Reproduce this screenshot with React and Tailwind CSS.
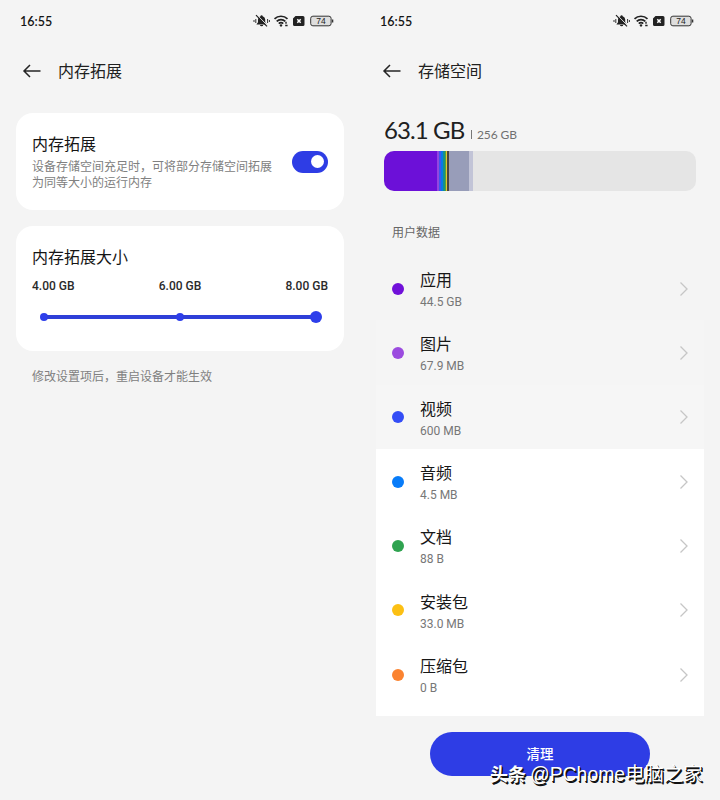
const cjk = "font-['Roboto','Noto_Sans_CJK_SC',sans-serif]";

function StatusIcons() {
  return (
    <svg width="84" height="16" viewBox="0 0 84 16" className="block">
      <g fill="#222">
        <path d="M3.4 11.4 5 9.2V6.6a3.600 3.600 0 0 1 2.500-3.300 1.100 1.100 0 0 1 2.200 0 3.600 3.600 0 0 1 2.500 3.300v2.600l1.600 2.200z" />
        <path d="M7 12.100h3.200a1.600 1.200 0 0 1-3.200 0z" />
      </g>
      <path d="M3.600 1.500 14.600 12.600" stroke="#f4f4f4" strokeWidth="1" />
      <path d="M3 2.200 14 13.300" stroke="#222" strokeWidth="1.200" />
      <path d="M1 7v2M2.800 6v4M14.600 6v4M16.400 7v2" stroke="#333" strokeWidth="1" />
      <g fill="none" stroke="#222" strokeWidth="1.700">
        <path d="M21.500 5.900a9.300 9.300 0 0 1 13 0" />
        <path d="M23.700 8.400a6.100 6.100 0 0 1 8.600 0" />
        <path d="M25.800 10.600a3.100 3.100 0 0 1 4.400 0" />
      </g>
      <circle cx="28" cy="12.400" r="1.200" fill="#222" />
      <path d="M33 8.800v2M32.200 12.500h2.400" stroke="#222" strokeWidth="1.400" />
      <path d="M42.500 3H50a1.500 1.500 0 0 1 1.500 1.500v7A1.500 1.500 0 0 1 50 13h-8.500a1.500 1.500 0 0 1-1.500-1.500V5.500z" fill="#222" />
      <path d="m44.300 6.300 3.400 3.400M47.700 6.300l-3.400 3.400" stroke="#fff" strokeWidth="1.500" />
      <rect x="57.700" y="3.200" width="20.400" height="9.600" rx="2.200" fill="#dedede" stroke="#333" />
      <path d="M79.600 6.500v3" stroke="#333" strokeWidth="1.400" />
      <text x="67.900" y="11" textAnchor="middle" fontSize="8.500" fontWeight="400" fill="#222" fontFamily="Liberation Sans, sans-serif">74</text>
    </svg>
  );
}

function Header({ title }) {
  return (
    <header>
      <div className="flex h-[42px] items-center justify-between pl-5 pr-[23px]">
        <span className="pt-0.5 font-['Lato',sans-serif] text-[12.500px] font-semibold text-[#151515]">16:55</span>
        <StatusIcons />
      </div>
      <div className="flex h-[58px] items-center pl-[22px]">
        <svg width="20" height="16" viewBox="0 0 20 16" fill="none" stroke="#242424" strokeWidth="1.500">
          <path d="M18.500 8H2M8 2 2 8l6 6" />
        </svg>
        <h1 className="ml-4 pt-0.5 text-[16px] font-normal leading-6 text-[#202020]">{title}</h1>
      </div>
    </header>
  );
}

function MemoryPanel() {
  return (
    <section className="w-[360px]">
      <Header title="内存拓展" />
      <div className="mx-4 mt-[13px] flex h-[97px] items-center justify-between rounded-[17px] bg-white px-4">
        <div className="pt-px">
          <h2 className="text-[16px] leading-6 text-[#151515]">内存拓展</h2>
          <p className="mt-0.5 whitespace-nowrap text-[12px] leading-4 text-[#808080]">
            设备存储空间充足时，可将部分存储空间拓展
            <br />
            为同等大小的运行内存
          </p>
        </div>
        <div className="flex h-[22px] w-9 items-center justify-end rounded-full bg-[#2e3de5] pr-1">
          <div className="size-[13.500px] rounded-full bg-white" />
        </div>
      </div>
      <div className="mx-4 mt-4 h-[125px] rounded-[17px] bg-white px-4 pt-5">
        <h2 className="text-[16px] leading-6 text-[#151515]">内存拓展大小</h2>
        <div className="mt-2 flex justify-between text-[12px] font-medium leading-4 text-[#2a2a2a]">
          <span>4.00 GB</span>
          <span>6.00 GB</span>
          <span>8.00 GB</span>
        </div>
        <div className="ml-2 mr-1.5 mt-[17px] flex h-3 items-center">
          <div className="size-2 rounded-full bg-[#2d3eea]" />
          <div className="-mx-px h-1 flex-1 bg-[#2e3fd8]" />
          <div className="size-2 rounded-full bg-[#2d3eea]" />
          <div className="-mx-px h-1 w-[128px] bg-[#2e3fd8]" />
          <div className="size-3 rounded-full bg-[#2d3eea]" />
        </div>
      </div>
      <p className="ml-8 mt-[18px] text-[12px] leading-4 text-[#808080]">修改设置项后，重启设备才能生效</p>
    </section>
  );
}

const rows = [
  ["应用", "44.5 GB", "bg-[#7010d9]", "bg-[#f4f4f4]"],
  ["图片", "67.9 MB", "bg-[#9b4bdf]", "bg-[#f5f5f5]"],
  ["视频", "600 MB", "bg-[#344df6]", "bg-[#f6f6f6]"],
  ["音频", "4.5 MB", "bg-[#087cf9]", "bg-white"],
  ["文档", "88 B", "bg-[#2fa350]", "bg-white"],
  ["安装包", "33.0 MB", "bg-[#fcc014]", "bg-white"],
  ["压缩包", "0 B", "bg-[#fb8330]", "bg-white"],
];

const segments = [
  "w-[53px] bg-[#6c10d8]",
  "w-[2px] bg-[#9147e0]",
  "w-[2px] bg-[#3e55ef]",
  "w-[2px] bg-[#0879e8]",
  "w-[1.500px] bg-[#16918a]",
  "w-[1px] bg-[#55a03c]",
  "w-[1.500px] bg-[#e3c832]",
  "w-[2px] bg-[#494441]",
  "w-[20px] bg-[#989db9]",
  "w-[4px] bg-[#c2c4d7]",
];

function StoragePanel() {
  return (
    <section className="w-[360px]">
      <Header title="存储空间" />
      <div className="flex h-[51px] items-baseline pl-6 pt-[15px] font-['Lato',sans-serif]">
        <span className="w-20 whitespace-nowrap text-[24px] font-normal leading-[30px] tracking-[-0.900px] text-[#202020]">63.1 GB</span>
        <span className="ml-[7px] h-[9px] w-px bg-[#777]" />
        <span className="ml-[5px] text-[12px] leading-4 tracking-[-0.100px] text-[#707070]">256 GB</span>
      </div>
      <div className="mx-6 flex h-10 overflow-hidden rounded-[10px] bg-[#e5e5e5]">
        {segments.map((s) => (
          <div key={s} className={s} />
        ))}
      </div>
      <h2 className="ml-8 mt-[34px] text-[12px] leading-4 text-[#666]">用户数据</h2>
      <div className="mx-4 mt-[15px] h-[460px] bg-white">
        {rows.map(([name, size, dot, bg]) => (
          <div key={name} className={"flex h-[64.330px] items-center px-4 pt-px " + bg}>
            <div className={"size-3 rounded-full " + dot} />
            <div className="ml-4 flex-1 pt-[3px]">
              <div className="text-[16px] leading-[23px] text-[#171717]">{name}</div>
              <div className="mt-px text-[12px] leading-[18px] text-[#777]">{size}</div>
            </div>
            <svg width="8" height="14" viewBox="0 0 8 14" fill="none" stroke="#c6c6c6" strokeWidth="1.300">
              <path d="m.5.5 6.500 6.500-6.500 6.500" />
            </svg>
          </div>
        ))}
      </div>
      <button className="mx-auto mt-4 flex h-11 w-[220px] items-center justify-center rounded-full bg-[#2e3de5] pt-px text-[13.500px] font-medium text-white">
        清理
      </button>
    </section>
  );
}

export default function App() {
  return (
    <main className={"relative flex h-[800px] w-[720px] overflow-hidden bg-[#f4f4f4] " + cjk}>
      <MemoryPanel />
      <StoragePanel />
      <div className="absolute left-[490px] top-[762px] flex items-baseline whitespace-nowrap font-['Liberation_Sans','Noto_Sans_CJK_SC',sans-serif] text-[18px] leading-6 text-white [text-shadow:1px_1px_0_#111,1.500px_1.500px_0_#111]">
        <span className="mr-[4px] font-bold">头条</span>
        <span className="text-[19.400px]">@PChome电脑之家</span>
      </div>
    </main>
  );
}
